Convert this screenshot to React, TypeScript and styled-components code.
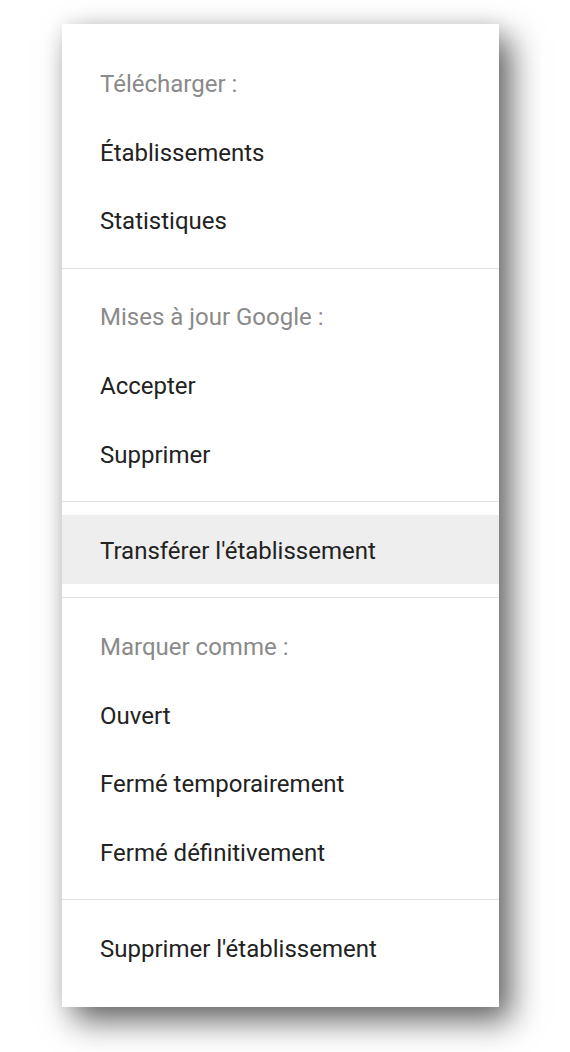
import React from "react";
import styled, { createGlobalStyle } from "styled-components";

const Global = createGlobalStyle`
  html, body { margin: 0; padding: 0; background: #ffffff; }
  body { font-family: Roboto, "Noto Sans", Arial, sans-serif; -webkit-font-smoothing: antialiased; }
`;

const Page = styled.div`
  width: 570px;
  height: 1052px;
  padding: 24px 0 0 62px;
  box-sizing: border-box;
`;

const Menu = styled.div`
  width: 437px;
  height: 983px;
  box-sizing: border-box;
  background: #ffffff;
  padding: 11.4px 0;
  display: flex;
  flex-direction: column;
  box-shadow: 12px 14px 30px rgba(0, 0, 0, 0.6), 0 0 18px rgba(0, 0, 0, 0.08);
`;

const Section = styled.div`
  padding: 13.3px 0;
  display: flex;
  flex-direction: column;
  & + & {
    border-top: 1px solid #e0e0e0;
  }
`;

const Row = styled.div<{ $header?: boolean; $active?: boolean }>`
  height: 68.6px;
  display: flex;
  align-items: center;
  padding: 2px 0 0 38px;
  box-sizing: border-box;
  font-size: 24px;
  color: ${(p) => (p.$header ? "#8a8a8a" : "#222222")};
  background: ${(p) => (p.$active ? "#eeeeee" : "transparent")};
  white-space: nowrap;
`;

const sections: { header?: string; items: string[]; active?: string }[] = [
  { header: "Télécharger :", items: ["Établissements", "Statistiques"] },
  { header: "Mises à jour Google :", items: ["Accepter", "Supprimer"] },
  { items: ["Transférer l'établissement"], active: "Transférer l'établissement" },
  { header: "Marquer comme :", items: ["Ouvert", "Fermé temporairement", "Fermé définitivement"] },
  { items: ["Supprimer l'établissement"] },
];

export default function App() {
  return (
    <>
      <Global />
      <Page>
        <Menu>
          {sections.map((s, i) => (
            <Section key={i}>
              {s.header && <Row $header>{s.header}</Row>}
              {s.items.map((it) => (
                <Row key={it} $active={s.active === it}>
                  {it}
                </Row>
              ))}
            </Section>
          ))}
        </Menu>
      </Page>
    </>
  );
}
